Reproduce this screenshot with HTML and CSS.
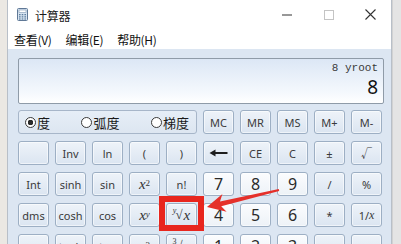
FILE: index.html
```html
<!DOCTYPE html>
<html lang="zh">
<head>
<meta charset="utf-8">
<title>计算器</title>
<link rel="stylesheet" href="styles.css">
</head>
<body>
<div class="screen">
  <div class="edge-left"></div>
  <div class="window">
    <div class="titlebar">
      <svg class="app-icon" width="11" height="13" viewBox="0 0 11 13">
        <rect x="0.5" y="0.5" width="10" height="12" rx="1" fill="#d7e4f1" stroke="#5f7896"/>
        <rect x="2" y="2" width="7" height="2.5" fill="#ffffff" stroke="#7e96b2" stroke-width="0.6"/>
        <g fill="#5f7f9f">
          <rect x="2" y="6" width="1.6" height="1.3"/><rect x="4.7" y="6" width="1.6" height="1.3"/><rect x="7.4" y="6" width="1.6" height="1.3"/>
          <rect x="2" y="8.2" width="1.6" height="1.3"/><rect x="4.7" y="8.2" width="1.6" height="1.3"/><rect x="7.4" y="8.2" width="1.6" height="1.3"/>
          <rect x="2" y="10.4" width="1.6" height="1.2"/><rect x="4.7" y="10.4" width="1.6" height="1.2"/><rect x="7.4" y="10.4" width="1.6" height="1.2"/>
        </g>
      </svg>
      <span class="title">计算器</span>
      <div class="controls">
        <span class="ctl"><svg width="10" height="10" viewBox="0 0 10 10"><rect x="0" y="4.5" width="10" height="1" fill="#333"/></svg></span>
        <span class="ctl"><svg width="10" height="10" viewBox="0 0 10 10"><rect x="0.5" y="0.5" width="9" height="9" fill="none" stroke="#c4c4c4"/></svg></span>
        <span class="ctl ctl-close"><svg width="11" height="11" viewBox="0 0 11 11"><path d="M0.5 0.5 L10.5 10.5 M10.5 0.5 L0.5 10.5" stroke="#333" stroke-width="1.1" fill="none"/></svg></span>
      </div>
    </div>
    <div class="menubar">
      <span class="menu-item">查看(V)</span>
      <span class="menu-item">编辑(E)</span>
      <span class="menu-item">帮助(H)</span>
    </div>
    <div class="body">
      <div class="display">
        <div class="expr">8 yroot</div>
        <div class="value">8</div>
      </div>
      <div class="keys">
        <div class="radio-group">
          <label class="radio-item"><span class="radio checked"></span>度</label>
          <label class="radio-item"><span class="radio"></span>弧度</label>
          <label class="radio-item"><span class="radio"></span>梯度</label>
        </div>
        <div class="key">MC</div>
        <div class="key">MR</div>
        <div class="key">MS</div>
        <div class="key">M+</div>
        <div class="key">M-</div>

        <div class="key"></div>
        <div class="key">Inv</div>
        <div class="key">ln</div>
        <div class="key">(</div>
        <div class="key">)</div>
        <div class="key"><svg width="19" height="8" viewBox="0 0 19 8"><path d="M0.5 4 L6.5 0.5 L6.5 3 L18.5 3 L18.5 5 L6.5 5 L6.5 7.5 Z" fill="#1e1e1e"/></svg></div>
        <div class="key">CE</div>
        <div class="key">C</div>
        <div class="key">±</div>
        <div class="key">√</div>

        <div class="key">Int</div>
        <div class="key">sinh</div>
        <div class="key">sin</div>
        <div class="key math"><i>x</i><sup>2</sup></div>
        <div class="key">n!</div>
        <div class="key num">7</div>
        <div class="key num">8</div>
        <div class="key num">9</div>
        <div class="key">/</div>
        <div class="key">%</div>

        <div class="key">dms</div>
        <div class="key">cosh</div>
        <div class="key">cos</div>
        <div class="key math"><i>x</i><sup><i>y</i></sup></div>
        <div class="key math"><span class="root"><i class="idx">y</i>√</span><i>x</i></div>
        <div class="key num">4</div>
        <div class="key num">5</div>
        <div class="key num">6</div>
        <div class="key">*</div>
        <div class="key">1/<i class="it">x</i></div>

        <div class="key math">π</div>
        <div class="key">tanh</div>
        <div class="key">tan</div>
        <div class="key math"><i>x</i><sup>3</sup></div>
        <div class="key math"><span class="root"><span class="idx">3</span>√</span><i>x</i></div>
        <div class="key num">1</div>
        <div class="key num">2</div>
        <div class="key num">3</div>
        <div class="key">−</div>
        <div class="key">=</div>
      </div>
    </div>
  </div>
  <div class="edge-right"></div>
</div>
<div class="highlight"></div>
<svg class="arrow" width="401" height="244" viewBox="0 0 401 244">
  <path d="M207 207 L222.4 194.1 L220.0 201.4 L278.8 189 L279.2 191 L221.2 206.2 L226.6 211.7 Z" fill="#e5302a"/>
</svg>
</body>
</html>
```
FILE: styles.css
```css
* {
  box-sizing: border-box;
  margin: 0;
  padding: 0;
}

html, body {
  width: 401px;
  height: 244px;
  overflow: hidden;
}

body {
  position: relative;
  font-family: "Noto Sans", "Noto Sans CJK SC", sans-serif;
  background: #ebe8e3;
}

.screen {
  display: flex;
  height: 244px;
  overflow: hidden;
}

.edge-left {
  width: 7px;
  background: #ebe8e3;
}

.edge-right {
  width: 9px;
  background: #e4e4e4;
  border-left: 1px solid #d2d2d2;
}

.window {
  width: 385px;
  display: flex;
  flex-direction: column;
  border-left: 1px solid #b8bfc8;
  border-right: 1px solid #b8bfc8;
  background: #ffffff;
  overflow: hidden;
}

.titlebar {
  height: 30px;
  flex: none;
  display: flex;
  align-items: center;
  padding-left: 9px;
  background: #ffffff;
}

.app-icon {
  display: block;
  margin-top: -1px;
}

.title {
  margin-left: 7px;
  font-family: "Noto Sans CJK SC", sans-serif;
  font-size: 12px;
  color: #1a1a1a;
  letter-spacing: -0.2px;
}

.controls {
  margin-left: auto;
  display: flex;
  height: 30px;
}

.ctl {
  width: 42px;
  display: flex;
  align-items: center;
  justify-content: center;
  padding-bottom: 1px;
}

.ctl-close {
  width: 41px;
}

.ctl svg {
  display: block;
}

.menubar {
  height: 19px;
  flex: none;
  display: flex;
  align-items: center;
  gap: 14px;
  padding-left: 6px;
  background: #ffffff;
}

.menu-item {
  font-family: "Noto Sans CJK SC", sans-serif;
  font-size: 12px;
  line-height: 16px;
  color: #111;
  letter-spacing: -0.3px;
}

.body {
  flex: 1;
  min-height: 0;
  background: #dce6f2;
  padding: 9px 7px 0 10px;
}

.display {
  height: 46px;
  border: 1px solid #8f9ba8;
  border-radius: 2px;
  background: linear-gradient(#dce7f5, #f4f8fd 75%, #ffffff);
  padding: 3px 5px 0 0;
  text-align: right;
}

.expr {
  font-family: "Liberation Mono", monospace;
  font-size: 11px;
  line-height: 13px;
  color: #3a3a3a;
}

.value {
  font-family: "Noto Sans", sans-serif;
  font-size: 19px;
  line-height: 24px;
  color: #111;
}

.keys {
  margin-top: 6px;
  display: grid;
  grid-template-columns: repeat(10, 31px);
  grid-auto-rows: 24px;
  column-gap: 6px;
  row-gap: 7px;
}

.radio-group {
  grid-column: span 5;
  border: 1px solid #a7b6c9;
  border-radius: 3px;
  background: linear-gradient(#e6eef7, #dde6f1);
  display: flex;
  align-items: center;
  justify-content: space-between;
  padding: 0 7px 0 6px;
}

.radio-item {
  display: flex;
  align-items: center;
  gap: 1px;
  font-family: "Noto Sans CJK SC", sans-serif;
  font-size: 13px;
  color: #1a1a1a;
}

.radio {
  width: 11px;
  height: 11px;
  border-radius: 50%;
  border: 1px solid #3a3a3a;
  background: #ffffff;
}

.radio.checked {
  background: radial-gradient(circle, #2a2a2a 0 2.6px, #ffffff 3px);
}

.key {
  border: 1px solid #9dafc4;
  border-radius: 3px;
  background: linear-gradient(#eef3f9, #dbe5f1);
  box-shadow: inset 0 0 0 1px rgba(255, 255, 255, 0.55);
  display: flex;
  align-items: center;
  justify-content: center;
  font-size: 11px;
  color: #3a3a3a;
  white-space: nowrap;
}

.key svg {
  display: block;
}

.key.num {
  background: linear-gradient(#fbfcfe, #edf2f7);
  font-size: 16px;
  color: #2a2a2a;
}

.key.math {
  font-family: "Liberation Serif", serif;
  font-size: 15px;
  color: #333;
}

.key.math sup {
  font-size: 9px;
  line-height: 0;
  position: relative;
  top: -1px;
}

.root {
  display: inline-flex;
  align-items: flex-start;
  font-size: 13px;
  margin-right: 1px;
}

.idx {
  font-size: 8px;
  line-height: 8px;
  margin-right: -1px;
}

.it {
  font-family: "Liberation Serif", serif;
  font-size: 12px;
}

.highlight {
  position: absolute;
  left: 159px;
  top: 196px;
  width: 45px;
  height: 35px;
  border: 6px solid #e8261e;
}

.arrow {
  position: absolute;
  left: 0;
  top: 0;
  pointer-events: none;
}
```
